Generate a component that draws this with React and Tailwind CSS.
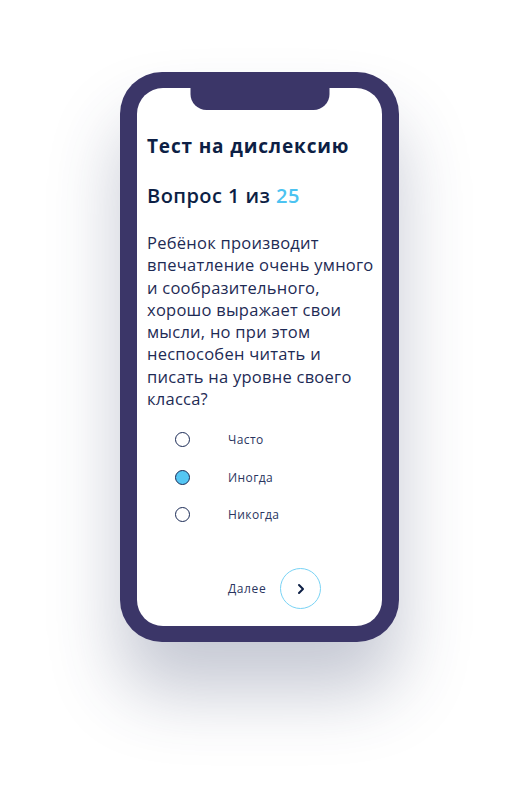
import React, { useState } from 'react';

const options = ['Часто', 'Иногда', 'Никогда'];

const questionLines = [
  'Ребёнок производит',
  'впечатление очень умного',
  'и сообразительного,',
  'хорошо выражает свои',
  'мысли, но при этом',
  'неспособен читать и',
  'писать на уровне своего',
  'класса?',
];

const App = () => {
  const [selected, setSelected] = useState(1);

  return (
    <div className="w-[519px] h-[810px] bg-white overflow-hidden pt-[72px] pl-[120px] font-['Open_Sans',sans-serif]">
      <div className="w-[279px] h-[570px] rounded-[42px] bg-[#3b3668] px-[17px] py-[16px] shadow-[0_50px_70px_rgba(50,60,100,0.28)]">
        <div className="relative h-full rounded-[26px] bg-white pl-[10px]">
          {/* notch */}
          <div className="absolute left-1/2 top-0 -translate-x-1/2 w-[139px] h-[22px] bg-[#3b3668] rounded-b-[16px]"></div>

          <h1 className="pt-[46px] text-[19px] leading-[24px] font-bold text-[#0d1f45] tracking-[0.85px]">
            Тест на дислексию
          </h1>

          <h2 className="mt-[25px] text-[20px] leading-[26px] font-semibold text-[#0d1f45] tracking-[0.45px]">
            Вопрос 1 из <span className="text-[#4cc3f1]">25</span>
          </h2>

          <p className="mt-[23px] text-[16.5px] leading-[22.3px] text-[#1e2b55] tracking-[0.25px]">
            {questionLines.map((line) => (
              <span key={line} className="block whitespace-nowrap">{line}</span>
            ))}
          </p>

          <div className="mt-[22px] flex flex-col gap-[22.5px] pl-[28px]">
            {options.map((opt, i) => (
              <button
                key={opt}
                onClick={() => setSelected(i)}
                className="flex items-center text-left"
              >
                <span
                  className={
                    i === selected
                      ? 'w-[15px] h-[15px] rounded-full border border-[#1a2a55] bg-[#55c6f3]'
                      : 'w-[15px] h-[15px] rounded-full border border-[#1a2a55] bg-white'
                  }
                ></span>
                <span className="ml-[38px] text-[12px] leading-[15px] text-[#2a3560] tracking-[0.4px]">{opt}</span>
              </button>
            ))}
          </div>

          <div className="mt-[46px] flex items-center pl-[81px]">
            <span className="text-[12px] text-[#2a3560] tracking-[0.6px]">Далее</span>
            <button className="ml-[14px] w-[41px] h-[41px] rounded-full border border-[#79d3f5] flex items-center justify-center">
              <svg width="10" height="12" viewBox="0 0 10 12" fill="none">
                <path d="M3 2l4 4-4 4" stroke="#0d1f45" strokeWidth="2" strokeLinecap="round" strokeLinejoin="round" />
              </svg>
            </button>
          </div>
        </div>
      </div>
    </div>
  );
};

export default App;
